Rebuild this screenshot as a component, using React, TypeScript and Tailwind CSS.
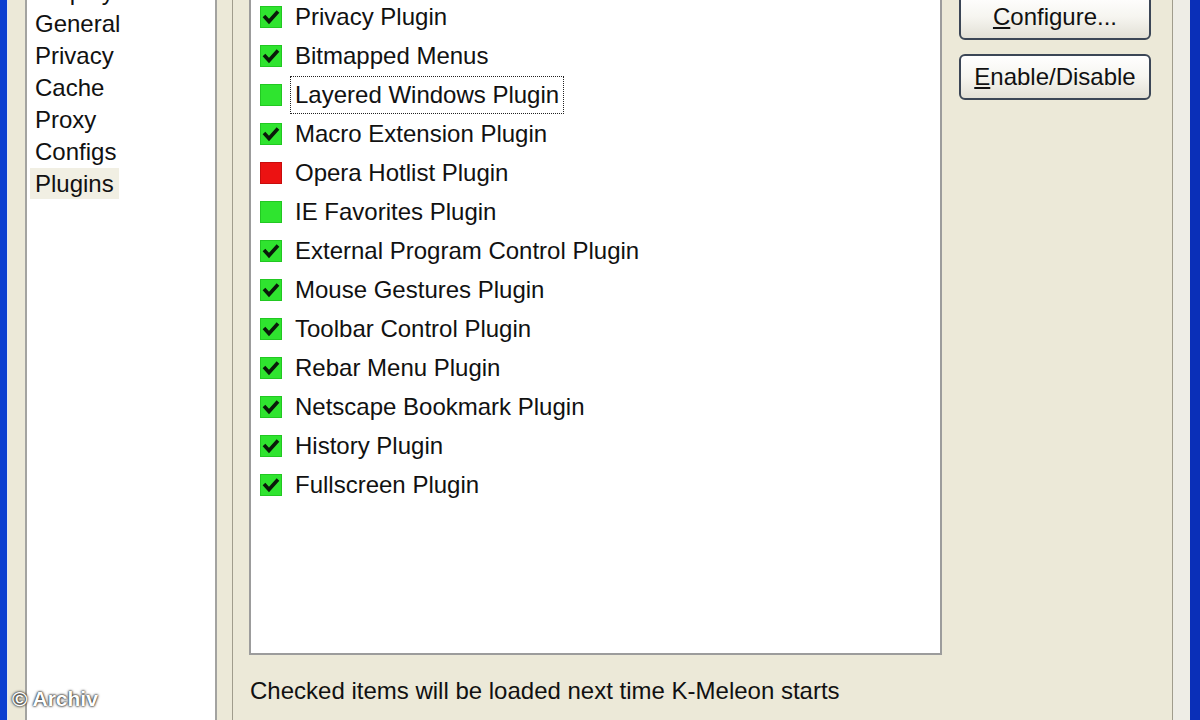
import React from "react";

const treeItems = ["Display", "General", "Privacy", "Cache", "Proxy", "Configs", "Plugins"];

type State = "on" | "off" | "error";

const plugins: { name: string; state: State }[] = [
  { name: "Privacy Plugin", state: "on" },
  { name: "Bitmapped Menus", state: "on" },
  { name: "Layered Windows Plugin", state: "off" },
  { name: "Macro Extension Plugin", state: "on" },
  { name: "Opera Hotlist Plugin", state: "error" },
  { name: "IE Favorites Plugin", state: "off" },
  { name: "External Program Control Plugin", state: "on" },
  { name: "Mouse Gestures Plugin", state: "on" },
  { name: "Toolbar Control Plugin", state: "on" },
  { name: "Rebar Menu Plugin", state: "on" },
  { name: "Netscape Bookmark Plugin", state: "on" },
  { name: "History Plugin", state: "on" },
  { name: "Fullscreen Plugin", state: "on" },
];

const StateBox: React.FC<{ state: State }> = ({ state }) => (
  <svg width="22" height="22" viewBox="0 0 22 22" className="shrink-0">
    <rect
      x="0.5"
      y="0.5"
      width="21"
      height="21"
      fill={state === "error" ? "#ec1212" : "#2fe42f"}
      stroke={state === "error" ? "#c80c0c" : "#22c822"}
    />
    {state === "on" && (
      <polyline
        points="4,10 9,15.5 18,5.5"
        fill="none"
        stroke="#0a1a0a"
        strokeWidth="3.6"
        strokeLinejoin="miter"
      />
    )}
  </svg>
);

const XpButton: React.FC<{ first: string; rest: string; className?: string }> = ({
  first,
  rest,
  className = "",
}) => (
  <button
    className={`h-[46px] w-[192px] rounded-[6px] border-2 border-[#3b4656] bg-gradient-to-b from-[#ffffff] via-[#f6f5f0] to-[#e2e0d6] text-[24px] text-[#111] leading-none ${className}`}
  >
    <span className="underline underline-offset-2">{first}</span>
    {rest}
  </button>
);

export default function App() {
  return (
    <div
      className="relative flex h-[720px] w-[1200px] overflow-hidden bg-[#ece9d8] text-[#111]"
      style={{ fontFamily: '"Liberation Sans", Arial, sans-serif' }}
    >
      {/* window frame left */}
      <div className="w-[7px] shrink-0 bg-[#0b3fd0]" />
      <div className="w-[18px] shrink-0 border-l border-[#dfe9f2] bg-[#ece9d8]" />

      {/* tree */}
      <div className="w-[192px] shrink-0 border-x-2 border-[#a3a3a0] bg-white">
        <div className="mt-[-25px] flex flex-col pl-[3px] text-[24px]">
          {treeItems.map((t) => (
            <div key={t} className="flex h-[32px] items-center">
              <span
                className={`px-[5px] leading-[31px] ${
                  t === "Plugins" ? "bg-[#f1efe3]" : ""
                }`}
              >
                {t}
              </span>
            </div>
          ))}
        </div>
      </div>

      <div className="w-[15px] shrink-0" />

      {/* tab page */}
      <div className="flex w-[941px] shrink-0 flex-col border-x border-[#a09c8c] bg-[#ece9d8]">
        <div className="flex items-start">
          <div className="ml-[16px] mt-[-20px] h-[675px] w-[693px] shrink-0 border-2 border-[#9c9c9c] bg-white">
            <div className="flex flex-col pt-[15px] pl-[9px] text-[24px]">
              {plugins.map((p) => (
                <div key={p.name} className="flex h-[39px] items-center">
                  <StateBox state={p.state} />
                  <span
                    className={`ml-[8px] px-[4px] leading-[36px] ${
                      p.name === "Layered Windows Plugin"
                        ? "border border-dotted border-[#222]"
                        : "border border-transparent"
                    }`}
                  >
                    {p.name}
                  </span>
                </div>
              ))}
            </div>
          </div>
          <div className="ml-[17px] mt-[-6px] flex flex-col gap-[14px]">
            <XpButton first="C" rest="onfigure..." />
            <XpButton first="E" rest="nable/Disable" />
          </div>
        </div>
        <div className="mt-[22px] pl-[17px] text-[24px] leading-[28px]">
          Checked items will be loaded next time K-Meleon starts
        </div>
      </div>

      {/* window frame right */}
      <div className="w-[17px] shrink-0 bg-[#eeede6]" />
      <div className="w-[10px] shrink-0 bg-[#0a2fb8]" />

      {/* watermark */}
      <div className="absolute left-[12px] top-[683px] text-[21px] font-bold text-white [text-shadow:0_0_2px_#000,0_0_3px_#333]">
        © Archiv
      </div>
    </div>
  );
}
